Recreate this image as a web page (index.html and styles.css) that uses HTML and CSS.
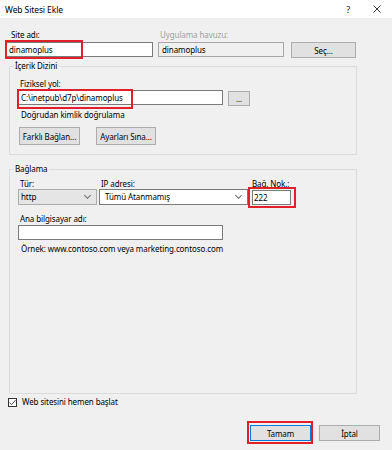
FILE: index.html
```html
<!DOCTYPE html>
<html lang="tr">
<head>
    <meta charset="UTF-8">
    <meta name="viewport" content="width=device-width, initial-scale=1.0">
    <title>Web Sitesi Ekle</title>
    <link rel="stylesheet" href="styles.css">
</head>
<body>

    <!-- Başlık çubuğu -->
    <div class="titlebar">
        <span class="title">Web Sitesi Ekle</span>
        <div class="title-icons">
            <span class="help">?</span>
            <svg class="close" width="8" height="8" viewBox="0 0 8 8">
                <path d="M0.5 0.5 L7.5 7.5 M7.5 0.5 L0.5 7.5" stroke="#222" stroke-width="0.9" fill="none"/>
            </svg>
        </div>
    </div>

    <div class="dialog">
        <div class="row-top">
            <div class="field field-site">
                <span class="lbl lbl-site">Site adı:</span>
                <div class="textbox">dinamoplus<span class="mark mark-site"></span></div>
            </div>
            <div class="field field-pool">
                <span class="lbl lbl-disabled">Uygulama havuzu:</span>
                <div class="textbox textbox-disabled">dinamoplus</div>
            </div>
            <button class="btn btn-sec">Seç...</button>
        </div>

        <fieldset class="group group-content">
            <legend>İçerik Dizini</legend>
            <span class="lbl lbl-path">Fiziksel yol:</span>
            <div class="path-row">
                <div class="textbox tb-path">C:\inetpub\d7p\dinamoplus<span class="mark mark-path"></span></div>
                <button class="btn btn-browse">...</button>
            </div>
            <div class="note note-auth">Doğrudan kimlik doğrulama</div>
            <div class="btn-row">
                <button class="btn btn-connect">Farklı Bağlan...</button>
                <button class="btn btn-test">Ayarları Sına...</button>
            </div>
        </fieldset>

        <fieldset class="group group-binding">
            <legend>Bağlama</legend>
            <div class="binding-row">
                <div class="field col-type">
                    <span class="lbl">Tür:</span>
                    <div class="select select-gray">http<span class="chev"></span></div>
                </div>
                <div class="field col-ip">
                    <span class="lbl">IP adresi:</span>
                    <div class="select">Tümü Atanmamış<span class="chev"></span></div>
                </div>
                <div class="field col-port">
                    <span class="lbl lbl-port">Bağ. Nok.:</span>
                    <div class="textbox tb-port">222<span class="mark mark-port"></span></div>
                </div>
            </div>
            <span class="lbl lbl-host">Ana bilgisayar adı:</span>
            <div class="textbox tb-host"></div>
            <div class="note note-example">Örnek: www.contoso.com veya marketing.contoso.com</div>
        </fieldset>

        <div class="check-row">
            <span class="checkbox">
                <svg width="9" height="9" viewBox="0 0 9 9">
                    <path d="M1.6 4.6 L3.6 6.6 L7.6 2.2" stroke="#333" stroke-width="0.9" fill="none"/>
                </svg>
            </span>
            <span class="check-label">Web sitesini hemen başlat</span>
        </div>

        <div class="footer">
            <button class="btn btn-ok">Tamam<span class="mark mark-ok"></span></button>
            <button class="btn btn-cancel">İptal</button>
        </div>
    </div>

</body>
</html>
```

FILE: styles.css
```css
body {
    margin: 0;
    width: 392px;
    height: 450px;
    overflow: hidden;
    background: #f0f0f0;
    font-family: 'Noto Sans', sans-serif;
    font-size: 8px;
    letter-spacing: -0.1px;
    color: #000;
}

/* Başlık çubuğu */
.titlebar {
    height: 18px;
    background: #fff;
    display: flex;
    align-items: center;
    justify-content: space-between;
    padding: 0 11px 0 5px;
}
.title {
    font-size: 8.5px;
}
.title-icons {
    display: flex;
    align-items: center;
    gap: 23px;
}
.help {
    font-size: 9px;
    color: #222;
}
.close {
    display: block;
}

.dialog {
    padding-left: 5px;
}

/* Etiketler ve kutular */
.field {
    display: flex;
    flex-direction: column;
}
.lbl {
    display: block;
    line-height: 10px;
    margin: 0 0 1px 2px;
    white-space: nowrap;
}
.lbl-site {
    margin-left: 6px;
    margin-bottom: 2px;
}
.lbl-disabled {
    color: #a0a0a0;
    margin-bottom: 2px;
}
.textbox {
    position: relative;
    box-sizing: border-box;
    height: 15px;
    line-height: 13px;
    padding-left: 3px;
    background: #fff;
    border: 1px solid #7a7a7a;
    white-space: nowrap;
}
.textbox-disabled {
    background: #f0f0f0;
    border-color: #a8a8a8;
}
.btn {
    position: relative;
    box-sizing: border-box;
    margin: 0;
    padding: 0;
    font-family: inherit;
    font-size: 8px;
    letter-spacing: -0.1px;
    color: #000;
    background: #e1e1e1;
    border: 1px solid #adadad;
    white-space: nowrap;
}

/* Kırmızı işaretler */
.mark {
    position: absolute;
    border: 2px solid #e3202a;
    pointer-events: none;
}
.mark-site {
    left: -1px;
    top: -3px;
    width: 74px;
    height: 15px;
}
.mark-path {
    left: -2px;
    top: -2px;
    width: 112px;
    height: 16px;
}
.mark-port {
    left: -5px;
    top: -4px;
    width: 44px;
    height: 17px;
}
.mark-ok {
    left: -4px;
    top: -5px;
    width: 62px;
    height: 19px;
}

/* Üst satır */
.row-top {
    display: flex;
    align-items: flex-start;
    margin-top: 12px;
}
.field-site {
    width: 148px;
}
.field-pool {
    width: 126px;
    margin-left: 5px;
}
.btn-sec {
    width: 65px;
    height: 16px;
    margin: 12px 0 0 7px;
}

/* Grup kutuları */
.group {
    box-sizing: border-box;
    width: 348px;
    margin: 3px 0 0 4px;
    padding: 0 0 0 8px;
    border: 1px solid #dcdcdc;
    min-width: 0;
}
.group legend {
    line-height: 10px;
    padding: 0 2px;
    margin-left: -5px;
}
.group-content {
    padding-bottom: 9px;
}
.lbl-path {
    margin-top: 8px;
}
.path-row {
    display: flex;
    align-items: flex-start;
    gap: 5px;
}
.tb-path {
    width: 205px;
    padding-left: 2px;
}
.btn-browse {
    width: 22px;
    height: 15px;
    margin-top: 1px;
    line-height: 10px;
}
.note {
    line-height: 10px;
    margin-left: 3px;
    white-space: nowrap;
}
.note-auth {
    margin-top: 4px;
}
.btn-row {
    display: flex;
    gap: 16px;
    margin-top: 7px;
    margin-left: 1px;
}
.btn-connect {
    width: 61px;
    height: 18px;
}
.btn-test {
    width: 60px;
    height: 18px;
}

/* Bağlama */
.group-binding {
    margin-top: 9px;
    height: 230px;
}
.binding-row {
    display: flex;
    margin-top: 5px;
}
.col-type {
    width: 79px;
}
.col-ip {
    width: 149px;
    margin-left: 2px;
}
.col-port {
    width: 39px;
    margin-left: 4px;
}
.col-type .lbl,
.col-ip .lbl {
    margin-bottom: 0;
}
.lbl-port {
    margin-left: 0;
    margin-bottom: 1px;
}
.select {
    position: relative;
    box-sizing: border-box;
    height: 16px;
    line-height: 14px;
    padding-left: 5px;
    background: #fff;
    border: 1px solid #7a7a7a;
    white-space: nowrap;
}
.select-gray {
    padding-left: 2px;
    background: #e5e5e5;
    border-color: #acacac;
}
.chev {
    position: absolute;
    right: 6px;
    top: 3px;
    width: 4px;
    height: 4px;
    border-right: 1px solid #707070;
    border-bottom: 1px solid #707070;
    transform: rotate(45deg);
}
.tb-port {
    height: 15px;
    padding-left: 1px;
}
.lbl-host {
    margin-top: 9px;
}
.tb-host {
    width: 205px;
}
.note-example {
    margin-top: 4px;
}

/* Onay kutusu */
.check-row {
    display: flex;
    align-items: center;
    gap: 5px;
    margin: 3px 0 0 3px;
}
.checkbox {
    display: block;
    box-sizing: border-box;
    width: 9px;
    height: 9px;
    background: #fff;
    border: 1px solid #333;
}
.checkbox svg {
    display: block;
    margin: -1px 0 0 -1px;
}
.check-label {
    line-height: 10px;
}

/* Alt düğmeler */
.footer {
    display: flex;
    justify-content: flex-end;
    gap: 8px;
    padding-right: 12px;
    margin-top: 18px;
}
.btn-ok {
    width: 61px;
    height: 16px;
    border-color: #0078d7;
}
.btn-cancel {
    width: 61px;
    height: 16px;
}
```
